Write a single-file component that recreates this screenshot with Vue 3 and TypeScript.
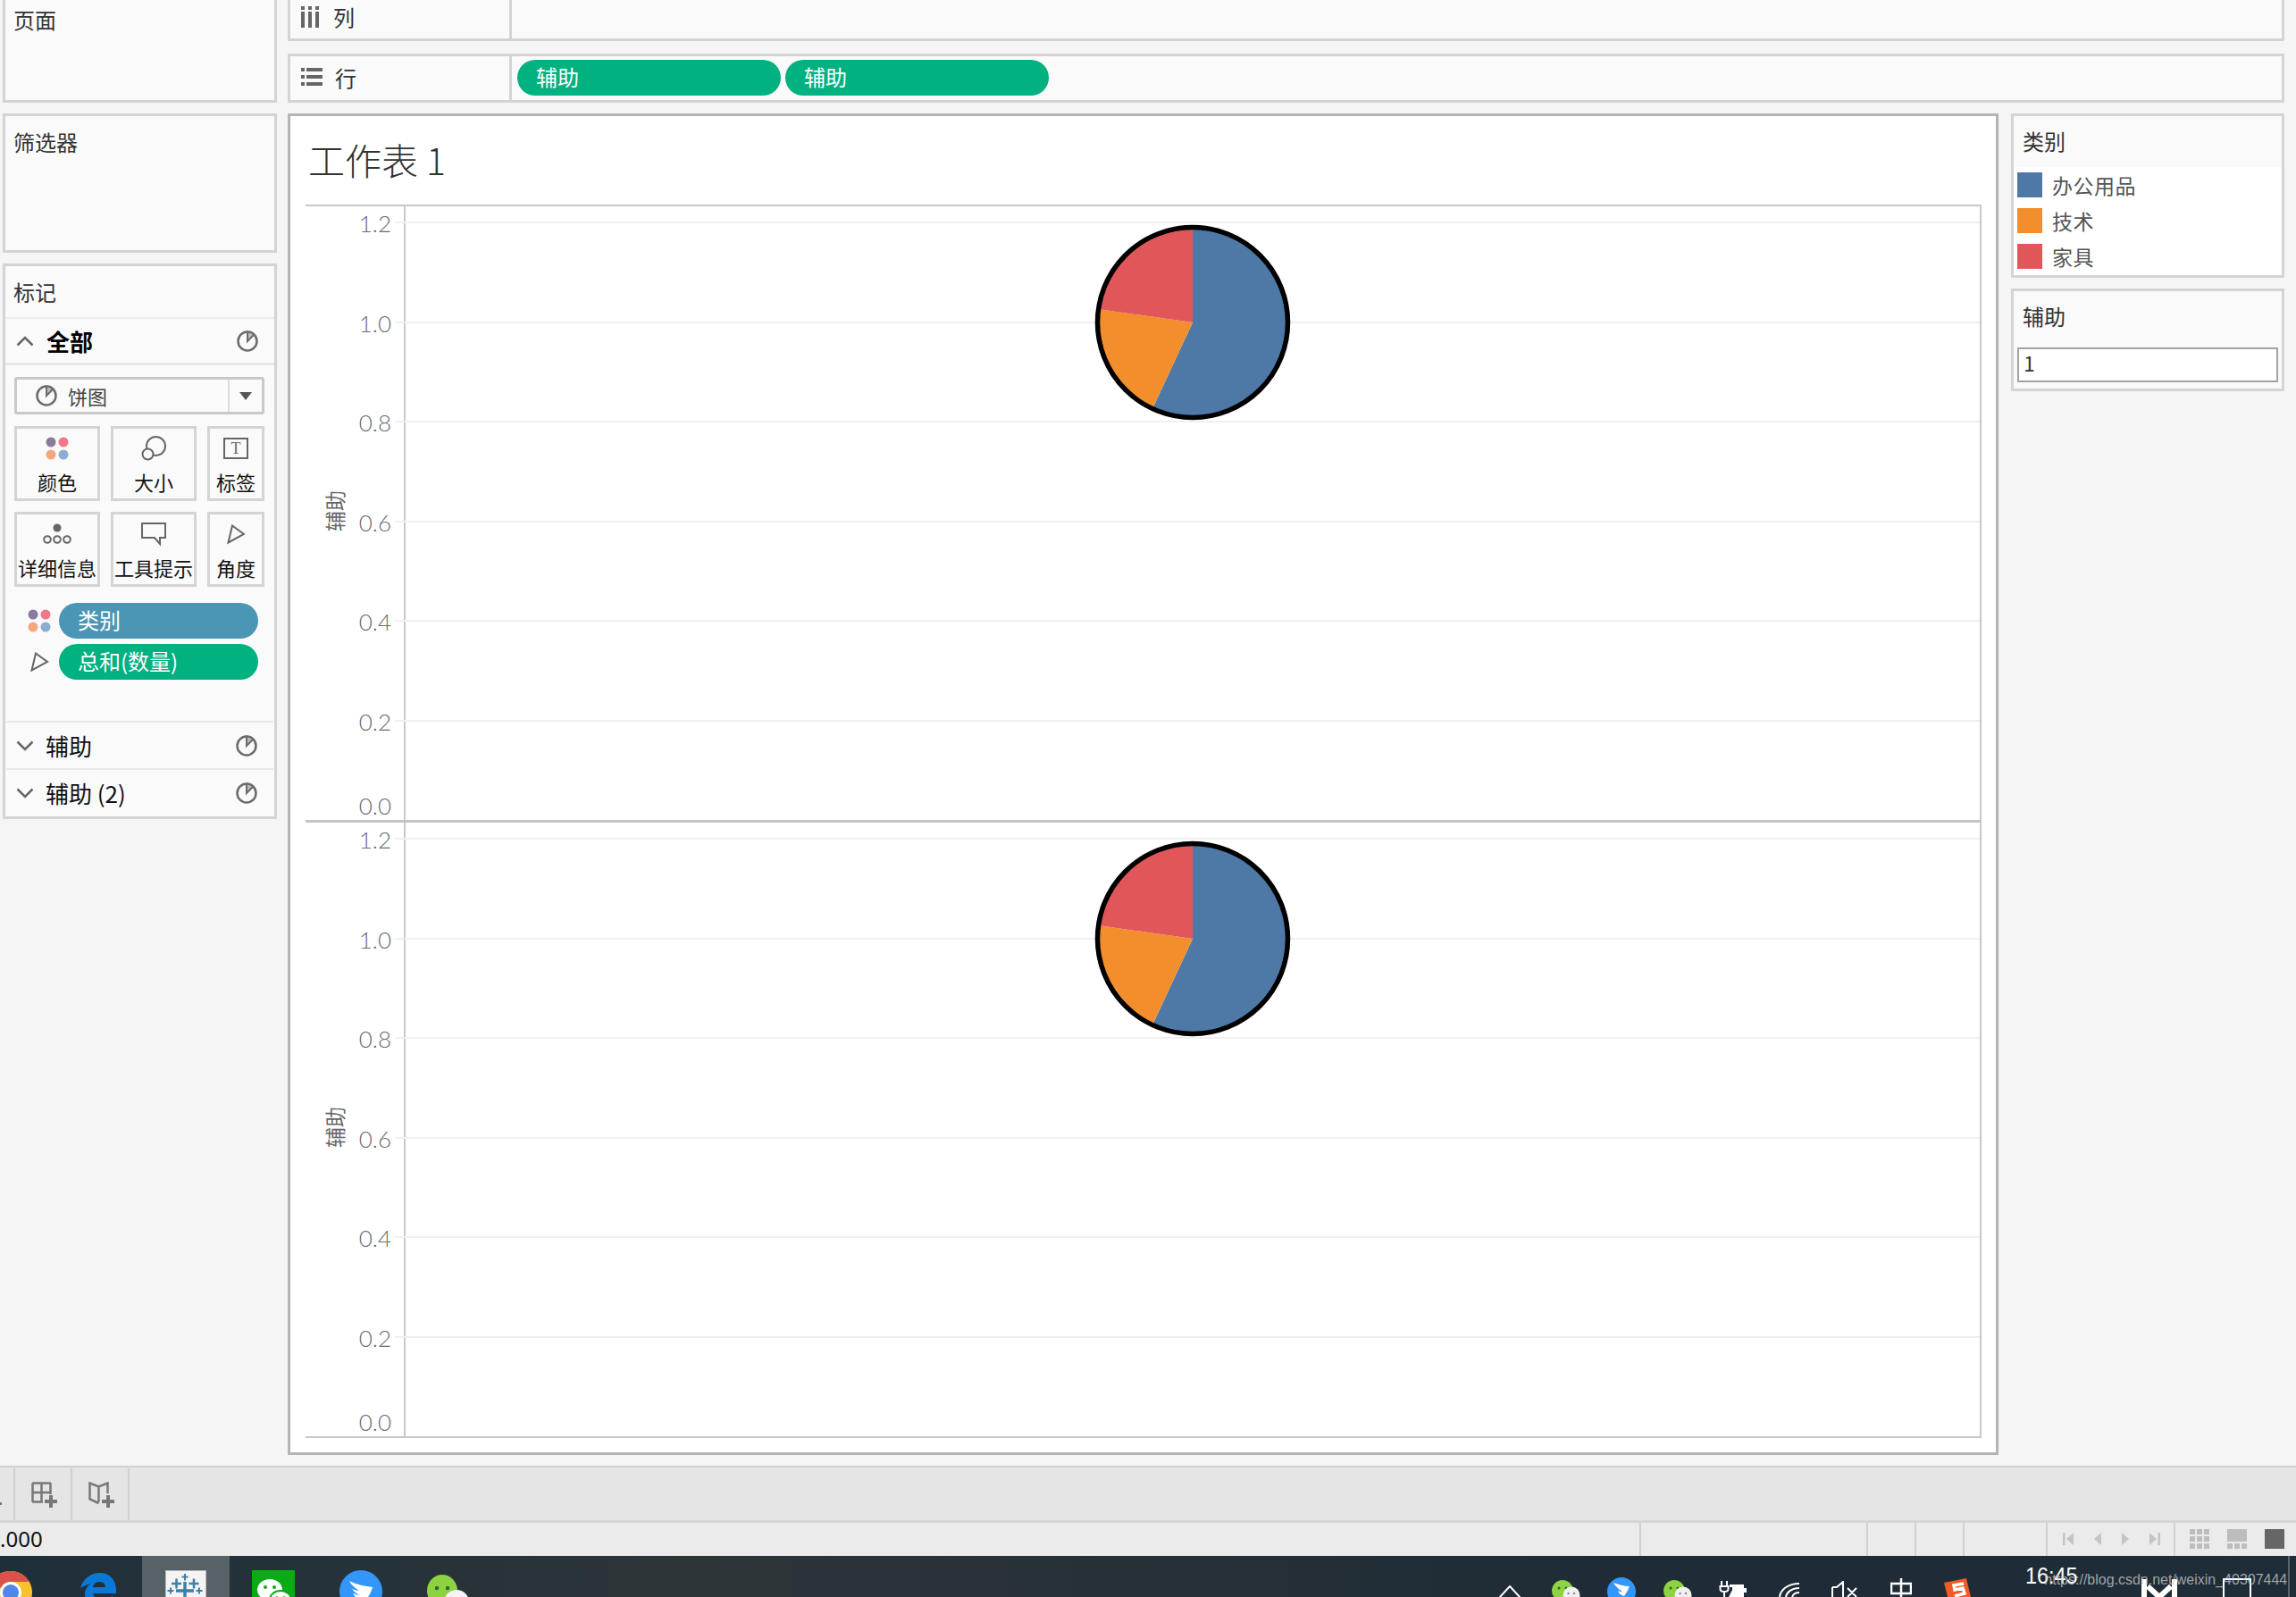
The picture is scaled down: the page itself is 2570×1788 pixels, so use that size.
<script setup lang="ts">
const ticks = ['1.2', '1.0', '0.8', '0.6', '0.4', '0.2', '0.0']
const gridStep = 111.55
const pieSize = 220
const panes = [
  { id: 'top', height: 687, base: 17, lastLabelTop: 671 },
  { id: 'bottom', height: 690, base: 17, lastLabelTop: 671 },
]

const shelfPills = ['辅助', '辅助']
const legend = [
  { name: '办公用品', color: '#4e79a7' },
  { name: '技术', color: '#f28e2b' },
  { name: '家具', color: '#e15759' },
]
const statusCells = [1837, 254, 54, 54, 93, 143]

function polar(deg: number, r = 107) {
  const a = (deg * Math.PI) / 180
  return `${(110 + r * Math.sin(a)).toFixed(2)} ${(110 - r * Math.cos(a)).toFixed(2)}`
}
function slice(from: number, to: number) {
  const large = to - from > 180 ? 1 : 0
  return `M110 110L${polar(from)}A107 107 0 ${large} 1 ${polar(to)}Z`
}
const slices = [
  { d: slice(0, 205), color: '#4e79a7' },
  { d: slice(205, 278), color: '#f28e2b' },
  { d: slice(278, 360), color: '#e15759' },
]
function labelTop(pane: { base: number; lastLabelTop: number }, i: number) {
  return i === ticks.length - 1 ? pane.lastLabelTop : pane.base + 2 + i * gridStep
}
function pieTop(pane: { base: number }) {
  return pane.base + 1 + gridStep - pieSize / 2
}
</script>

<template>
  <div class="page">
    <div class="workspace">
      <aside class="side">
        <section class="card page-card"><h3>页面</h3></section>
        <section class="card filter-card"><h3>筛选器</h3></section>
        <section class="card marks-card">
          <h3 class="marks-title">标记</h3>
          <div class="mark-row all">
            <svg class="chev" width="20" height="12" viewBox="0 0 20 12"><path d="M1.5 10.500 10 2l8.500 8.500" /></svg>
            <b>全部</b>
            <svg class="pie-ico" width="24" height="24" viewBox="0 0 24 24"><circle cx="12" cy="12" r="10.500" /><path class="wedge" d="M12 12V1.500a10.500 10.500 0 0 1 7.400 3Z" /></svg>
          </div>
          <div class="type-select">
            <svg class="pie-ico" width="24" height="24" viewBox="0 0 24 24"><circle cx="12" cy="12" r="10.500" /><path class="wedge" d="M12 12V1.500a10.500 10.500 0 0 1 7.400 3Z" /></svg>
            <span>饼图</span>
            <i class="select-arrow"><em /></i>
          </div>
          <div class="mark-buttons">
            <div class="mark-btn">
              <svg width="26" height="26" viewBox="0 0 26 26"><circle cx="6" cy="6" r="5.500" fill="#8c7a9e" /><circle cx="20" cy="6" r="5.500" fill="#f0788a" /><circle cx="6" cy="20" r="5.500" fill="#f4a77c" /><circle cx="20" cy="20" r="5.500" fill="#8aaed2" /></svg>
              <span>颜色</span>
            </div>
            <div class="mark-btn">
              <svg class="line" width="28" height="28" viewBox="0 0 28 28"><circle cx="16.500" cy="11.500" r="10.500" /><circle cx="7.500" cy="20.500" r="6" fill="#fafafa" /></svg>
              <span>大小</span>
            </div>
            <div class="mark-btn">
              <svg class="line" width="28" height="24" viewBox="0 0 28 24"><rect x="1" y="1" width="26" height="22" /><text x="14" y="18" text-anchor="middle" class="t-glyph">T</text></svg>
              <span>标签</span>
            </div>
            <div class="mark-btn">
              <svg class="line" width="32" height="24" viewBox="0 0 32 24"><circle cx="16" cy="5" r="4.500" fill="#666" stroke="none" /><circle cx="5" cy="18" r="3.800" /><circle cx="16" cy="18" r="3.800" /><circle cx="27" cy="18" r="3.800" /></svg>
              <span>详细信息</span>
            </div>
            <div class="mark-btn">
              <svg class="line" width="28" height="26" viewBox="0 0 28 26"><path d="M1 1h26v16h-6v7l-6-7H1Z" /></svg>
              <span>工具提示</span>
            </div>
            <div class="mark-btn">
              <svg class="line" width="20" height="22" viewBox="0 0 20 22"><path d="M6 1.500 19 11 1.500 20.500Z" /></svg>
              <span>角度</span>
            </div>
          </div>
          <div class="encodings">
            <div class="encoding">
              <svg width="26" height="26" viewBox="0 0 26 26"><circle cx="6" cy="6" r="5.500" fill="#8c7a9e" /><circle cx="20" cy="6" r="5.500" fill="#f0788a" /><circle cx="6" cy="20" r="5.500" fill="#f4a77c" /><circle cx="20" cy="20" r="5.500" fill="#8aaed2" /></svg>
              <span class="pill blue">类别</span>
            </div>
            <div class="encoding">
              <svg class="line" width="20" height="22" viewBox="0 0 20 22"><path d="M6 1.500 19 11 1.500 20.500Z" /></svg>
              <span class="pill">总和(数量)</span>
            </div>
          </div>
          <div class="mark-row sub">
            <svg class="chev" width="20" height="12" viewBox="0 0 20 12"><path d="M1.500 1.500 10 10l8.500-8.500" /></svg>
            <span>辅助</span>
            <svg class="pie-ico" width="24" height="24" viewBox="0 0 24 24"><circle cx="12" cy="12" r="10.500" /><path class="wedge" d="M12 12V1.500a10.500 10.500 0 0 1 7.400 3Z" /></svg>
          </div>
          <div class="mark-row sub">
            <svg class="chev" width="20" height="12" viewBox="0 0 20 12"><path d="M1.500 1.500 10 10l8.500-8.500" /></svg>
            <span>辅助 (2)</span>
            <svg class="pie-ico" width="24" height="24" viewBox="0 0 24 24"><circle cx="12" cy="12" r="10.500" /><path class="wedge" d="M12 12V1.500a10.500 10.500 0 0 1 7.400 3Z" /></svg>
          </div>
        </section>
      </aside>

      <main class="main">
        <div class="shelf col-shelf">
          <div class="shelf-head">
            <svg width="20" height="24" viewBox="0 0 20 24" fill="#666"><rect x="0" y="0" width="4" height="4" /><rect x="8" y="0" width="4" height="4" /><rect x="16" y="0" width="4" height="4" /><rect x="0" y="6" width="4" height="18" /><rect x="8" y="6" width="4" height="18" /><rect x="16" y="6" width="4" height="18" /></svg>
            <span>列</span>
          </div>
        </div>
        <div class="shelf row-shelf">
          <div class="shelf-head">
            <svg width="24" height="20" viewBox="0 0 24 20" fill="#666"><rect x="0" y="0" width="4" height="4" /><rect x="0" y="8" width="4" height="4" /><rect x="0" y="16" width="4" height="4" /><rect x="6" y="0" width="18" height="4" /><rect x="6" y="8" width="18" height="4" /><rect x="6" y="16" width="18" height="4" /></svg>
            <span>行</span>
          </div>
          <div class="shelf-pills">
            <span v-for="(p, i) in shelfPills" :key="i" class="pill">{{ p }}</span>
          </div>
        </div>

        <div class="content">
          <div class="sheet">
            <h1 class="sheet-title">工作表 1</h1>
            <div class="chart">
              <div v-for="pane in panes" :key="pane.id" class="pane" :style="{ height: pane.height + 'px' }">
                <div class="axis-title"><span>辅助</span></div>
                <div class="axis">
                  <span v-for="(t, i) in ticks" :key="t" class="tick" :style="{ top: labelTop(pane, i) + 'px' }">{{ t }}</span>
                </div>
                <div class="plot">
                  <i v-for="k in 6" :key="k" class="grid" :style="{ top: pane.base + (k - 1) * gridStep + 'px' }" />
                  <svg class="pie" :width="pieSize" :height="pieSize" viewBox="0 0 220 220" :style="{ top: pieTop(pane) + 'px' }">
                    <path v-for="s in slices" :key="s.color" :d="s.d" :fill="s.color" />
                    <circle cx="110" cy="110" r="106.500" fill="none" stroke="#000" stroke-width="5.500" />
                  </svg>
                </div>
              </div>
            </div>
          </div>

          <aside class="legend-col">
            <section class="card legend">
              <h3>类别</h3>
              <ul>
                <li v-for="l in legend" :key="l.name">
                  <i :style="{ background: l.color }" />
                  <span>{{ l.name }}</span>
                </li>
              </ul>
            </section>
            <section class="card param">
              <h3>辅助</h3>
              <div class="param-input">1</div>
            </section>
          </aside>
        </div>
      </main>
    </div>

    <div class="tabbar">
      <div class="tab-cell first"><svg width="4" height="8" viewBox="0 0 4 8" fill="#777"><rect y="3" width="2" height="3" /></svg></div>
      <div class="tab-cell">
        <svg width="30" height="30" viewBox="0 0 30 30"><g fill="none" stroke="#777" stroke-width="2.500"><path d="M13 22.500H2.500a1 1 0 0 1-1-1v-19a1 1 0 0 1 1-1h18a1 1 0 0 1 1 1V14M1.500 12h20M11.500 1.500v21" /></g><path fill="#777" d="M20 15h4v5h5v4h-5v5h-4v-5h-5v-4h5Z" /></svg>
      </div>
      <div class="tab-cell">
        <svg width="30" height="30" viewBox="0 0 30 30"><path fill="none" stroke="#777" stroke-width="2.500" d="M21.500 13V1.500l-10 4-10-4v18l10 4.500M11.500 5.500v17" /><path fill="#777" d="M20 15h4v5h5v4h-5v5h-4v-5h-5v-4h5Z" /></svg>
      </div>
    </div>

    <div class="statusbar">
      <div v-for="(w, i) in statusCells" :key="i" class="status-cell" :style="{ width: w + 'px' }">
        <span v-if="i === 0">.000</span>
        <div v-if="i === 5" class="pager">
          <svg width="12" height="14" viewBox="0 0 12 14" fill="#c4c4c4"><rect width="2.500" height="14" /><path d="M12 0v14L4 7Z" /></svg>
          <svg width="8" height="14" viewBox="0 0 8 14" fill="#c4c4c4"><path d="M8 0v14L0 7Z" /></svg>
          <svg width="8" height="14" viewBox="0 0 8 14" fill="#c4c4c4"><path d="M0 0v14l8-7Z" /></svg>
          <svg width="12" height="14" viewBox="0 0 12 14" fill="#c4c4c4"><rect x="9.500" width="2.500" height="14" /><path d="M0 0v14l8-7Z" /></svg>
        </div>
      </div>
      <div class="view-btns">
        <svg width="22" height="22" viewBox="0 0 22 22" fill="#bdbdbd"><g v-for="r in 3" :key="r"><rect v-for="c in 3" :key="c" :x="(c - 1) * 8" :y="(r - 1) * 8" width="6" height="6" /></g></svg>
        <svg width="22" height="22" viewBox="0 0 22 22" fill="#bdbdbd"><rect width="22" height="14" /><rect y="16" width="6" height="6" /><rect x="8" y="16" width="6" height="6" /><rect x="16" y="16" width="6" height="6" /></svg>
        <svg width="22" height="22" viewBox="0 0 22 22" fill="#666"><rect width="22" height="22" /></svg>
      </div>
    </div>

    <div class="taskbar">
      <div class="task-apps">
        <div class="task-slot chrome">
          <svg width="48" height="48" viewBox="0 0 48 48"><circle cx="24" cy="24" r="24" fill="#fbc02d" /><path d="M24 0a24 24 0 0 1 21 12H24a12 12 0 0 0-11 7L4 9A24 24 0 0 1 24 0Z" fill="#d9534a" /><circle cx="24" cy="24" r="12" fill="#fff" /><circle cx="24" cy="24" r="9" fill="#4f86ec" /></svg>
        </div>
        <div class="task-slot edge">
          <svg width="40" height="40" viewBox="0 0 40 40"><path d="M0 17C3 6 12 0 22 0c11 0 18 8 18 20v3H14c1 7 12 8 22 3v9C24 41 5 38 5 23c0-4 3-9 7-11-5 1-9 3-12 5Zm14-1h14c0-8-13-8-14 0Z" fill="#0a78d7" /></svg>
        </div>
        <div class="task-slot active">
          <svg width="46" height="46" viewBox="0 0 46 46"><rect x="0.500" y="0.500" width="45" height="45" fill="#f4f4f4" stroke="#bbb" /><g fill="none" stroke="#3f7fa8"><path stroke-width="3.500" d="M22 13v20M12 23h20" /><path stroke-width="2.500" d="M12.500 9.500v11M7 15h11M32 9.500v11M26.500 15h11" /><path stroke-width="2" d="M22 4v7.500M18.500 7.500h7M6 19.500v7M2.500 23h7M38 19.500v7M34.500 23h7" /></g></svg>
        </div>
        <div class="task-slot">
          <svg width="48" height="48" viewBox="0 0 48 48"><rect width="48" height="48" fill="#09ab17" /><ellipse cx="20" cy="22" rx="14" ry="12" fill="#fff" /><circle cx="15" cy="19" r="2" fill="#09ab17" /><circle cx="25" cy="19" r="2" fill="#09ab17" /><ellipse cx="32" cy="33" rx="12" ry="10" fill="#fff" stroke="#09ab17" stroke-width="2" /><circle cx="28" cy="31" r="1.700" fill="#09ab17" /><circle cx="36" cy="31" r="1.700" fill="#09ab17" /></svg>
        </div>
        <div class="task-slot">
          <svg width="48" height="48" viewBox="0 0 48 48"><circle cx="24" cy="24" r="24" fill="#3296fa" /><path d="M11 12c8 4 18 6 26 7-2 7-5 12-8 14l-2 10-3-1 1-8c-5-1-8-4-10-8 3 1 6 2 8 2-3-1-7-4-9-7 3 1 6 2 8 2-5-3-9-7-11-11Z" fill="#fff" /></svg>
        </div>
        <div class="task-slot wechat">
          <svg width="48" height="44" viewBox="0 0 48 44"><ellipse cx="17" cy="18" rx="17" ry="18" fill="#8ed141" /><circle cx="11" cy="15" r="2.200" fill="#1d6f2d" /><circle cx="23" cy="15" r="2.200" fill="#1d6f2d" /><circle cx="33" cy="31" r="14" fill="#f4f4f4" /><circle cx="28" cy="28" r="2" fill="#777" /><circle cx="38" cy="28" r="2" fill="#777" /></svg>
        </div>
      </div>

      <div class="tray">
        <div class="tray-slot top-33"><svg width="26" height="14" viewBox="0 0 26 14"><path d="M1 14 13 1l12 13" fill="none" stroke="#fff" stroke-width="2" /></svg></div>
        <div class="tray-slot top-27"><svg width="32" height="20" viewBox="0 0 32 20"><ellipse cx="12" cy="12" rx="12" ry="12" fill="#8ed141" /><circle cx="8" cy="9" r="1.500" fill="#1d6f2d" /><circle cx="16" cy="9" r="1.500" fill="#1d6f2d" /><circle cx="22" cy="17" r="9.500" fill="#f0f0f0" /><circle cx="18.500" cy="15" r="1.200" fill="#888" /><circle cx="25" cy="15" r="1.200" fill="#888" /></svg></div>
        <div class="tray-slot top-24"><svg width="32" height="22" viewBox="0 0 32 22"><circle cx="16" cy="16" r="16" fill="#3296fa" /><path d="M7 6c6 2 12 4 18 4-2 5-4 8-6 11-4-1-6-3-7-6 2 1 3 1 5 1-3-2-8-6-10-10Z" fill="#fff" /></svg></div>
        <div class="tray-slot top-27"><svg width="32" height="20" viewBox="0 0 32 20"><ellipse cx="12" cy="12" rx="12" ry="12" fill="#8ed141" /><circle cx="8" cy="9" r="1.500" fill="#1d6f2d" /><circle cx="16" cy="9" r="1.500" fill="#1d6f2d" /><circle cx="22" cy="17" r="9.500" fill="#f0f0f0" /><circle cx="18.500" cy="15" r="1.200" fill="#888" /><circle cx="25" cy="15" r="1.200" fill="#888" /></svg></div>
        <div class="tray-slot top-28"><svg width="32" height="18" viewBox="0 0 32 18"><path d="M3 0v6M9 0v6M1.500 6h9v3c0 2-2 3-4.500 3S1.500 11 1.500 9ZM6 12v6" fill="none" stroke="#fff" stroke-width="2" /><path d="M12 4h16v4h3v5h-3v5H11l4-8V7h-3Z" fill="#fff" /></svg></div>
        <div class="tray-slot top-30"><svg width="24" height="16" viewBox="0 0 24 16" fill="none" stroke="#fff" stroke-width="2"><path d="M1 16C2 8 10 1 23 1M8 16C9 11 14 6 23 6M15 16c1-3 3-5 8-5" /></svg></div>
        <div class="tray-slot top-28"><svg width="30" height="18" viewBox="0 0 30 18" fill="none" stroke="#fff" stroke-width="2"><path d="M1 7h5l7-6v17M1 7v11M18 8l10 10M28 8 18 18" /></svg></div>
        <div class="tray-slot top-25"><svg width="24" height="21" viewBox="0 0 24 21"><path d="M12 0v21M1 6h22v11H1Z" fill="none" stroke="#fff" stroke-width="2.500" /></svg></div>
        <div class="tray-slot top-25"><svg width="32" height="21" viewBox="0 0 32 21"><path d="M2 5 27 0l5 21H6Z" fill="#f05a24" /><path d="M24 6 13 8l1 5 9-2 2 6-11 3" fill="none" stroke="#fff" stroke-width="3.500" /></svg></div>
      </div>
      <span class="clock">16:45</span>
      <svg class="task-mark" width="42" height="20" viewBox="0 0 42 20"><path d="M4 20V0M38 20V0" fill="none" stroke="#fff" stroke-width="6" /><path d="M8 8l13 12L34 8" fill="none" stroke="#fff" stroke-width="6" /></svg>
      <svg class="task-note" width="32" height="21" viewBox="0 0 32 21"><path d="M1 21V1h30v20" fill="none" stroke="#fff" stroke-width="2" /></svg>
      <span class="watermark">https://blog.csdn.net/weixin_40307444</span>
      <i class="task-edge" />
    </div>
  </div>
</template>

<style>
html,
body {
  margin: 0;
  background: #f5f5f5;
  overflow: hidden;
}
</style>

<style scoped>
.page {
  width: 2570px;
  height: 1788px;
  display: flex;
  flex-direction: column;
  overflow: hidden;
  font-family: "Noto Sans CJK SC", sans-serif;
  color: #333;
  font-size: 24px;
}
h1, h3, ul {
  margin: 0;
  padding: 0;
  font-weight: 400;
}
.workspace {
  height: 1641px;
  display: flex;
  gap: 12px;
  padding-left: 3px;
  padding-right: 13px;
  box-sizing: border-box;
}
.side {
  width: 307px;
  flex: none;
  display: flex;
  flex-direction: column;
  gap: 12px;
}
.card {
  background: #fafafa;
  border: 3px solid #d4d4d4;
  box-sizing: border-box;
}
.card h3 {
  font-size: 24px;
  line-height: 32px;
}
.page-card {
  height: 115px;
  border-top: none;
  padding: 6px 0 0 9px;
}
.filter-card {
  height: 156px;
  padding: 13px 0 0 9px;
}
.marks-card {
  height: 622px;
  display: flex;
  flex-direction: column;
}
.marks-title {
  height: 59px;
  padding: 13px 0 0 9px;
  box-sizing: border-box;
  border-bottom: 2px solid #ececec;
}
.mark-row {
  display: flex;
  align-items: center;
  padding: 0 18px 0 12px;
  color: #111;
}
.mark-row .pie-ico {
  margin-left: auto;
}
.all {
  height: 52px;
  box-sizing: border-box;
  border-bottom: 3px solid #e8e8e8;
  font-size: 26px;
}
.all b {
  margin-left: 14px;
  color: #000;
}
.chev path {
  fill: none;
  stroke: #666;
  stroke-width: 2.500;
}
.pie-ico circle {
  fill: none;
  stroke: #6b6b6b;
  stroke-width: 2.500;
}
.pie-ico .wedge {
  fill: #bdbdbd;
  stroke: #6b6b6b;
  stroke-width: 2;
}
.type-select {
  margin: 13px 11px 0 10px;
  height: 42px;
  border: 3px solid #c9c9c9;
  border-radius: 3px;
  box-sizing: border-box;
  display: flex;
  align-items: center;
  padding-left: 21px;
  font-size: 22px;
  color: #444;
}
.type-select span {
  margin-left: 12px;
}
.select-arrow {
  margin-left: auto;
  width: 36px;
  align-self: stretch;
  border-left: 2px solid #ddd;
  display: flex;
  align-items: center;
  justify-content: center;
}
.select-arrow em {
  border: 7px solid transparent;
  border-top: 9px solid #555;
  border-bottom: none;
}
.mark-buttons {
  margin: 13px 11px 0 10px;
  display: grid;
  grid-template-columns: 96px 96px 64px;
  grid-auto-rows: 84px;
  gap: 12px;
}
.mark-btn {
  border: 3px solid #d4d4d4;
  box-sizing: border-box;
  display: flex;
  flex-direction: column;
  align-items: center;
  font-size: 22px;
  color: #111;
}
.mark-btn svg {
  height: 30px;
  margin-top: 7px;
}
.mark-btn span {
  line-height: 30px;
  margin-top: 7px;
  white-space: nowrap;
}
.line {
  fill: none;
  stroke: #666;
  stroke-width: 2;
}
.t-glyph {
  font-family: "Liberation Serif", serif;
  font-size: 18px;
  fill: #666;
  stroke: none;
}
.encodings {
  margin: 18px 18px 0 25px;
  display: flex;
  flex-direction: column;
  gap: 6px;
  height: 132px;
  flex: none;
  box-sizing: border-box;
}
.encoding {
  display: flex;
  align-items: center;
  height: 40px;
}
.encoding svg {
  width: 30px;
  margin-left: -2px;
  margin-right: 7px;
  flex: none;
}
.pill {
  background: #02b180;
  color: #fff;
  height: 40px;
  line-height: 38px;
  border-radius: 20px;
  padding: 0 21px;
  box-sizing: border-box;
  font-size: 24px;
  display: block;
}
.encoding .pill {
  flex: 1;
}
.pill.blue {
  background: #4c96b5;
}
.sub {
  height: 53px;
  box-sizing: border-box;
  border-top: 2px solid #e8e8e8;
  font-size: 26px;
  margin: 0 1px;
  padding-left: 11px;
}
.sub span {
  margin-left: 13px;
}
.main {
  flex: 1;
  min-width: 0;
  display: flex;
  flex-direction: column;
}
.shelf {
  background: #fafafa;
  border: 3px solid #d4d4d4;
  box-sizing: border-box;
  display: flex;
}
.col-shelf {
  height: 46px;
  border-top: none;
}
.row-shelf {
  height: 55px;
  margin-top: 14px;
}
.shelf-head {
  width: 248px;
  flex: none;
  box-sizing: border-box;
  border-right: 3px solid #d4d4d4;
  display: flex;
  align-items: center;
  padding-left: 12px;
  color: #333;
}
.col-shelf .shelf-head {
  padding-bottom: 6px;
}
.row-shelf .shelf-head {
  padding-bottom: 3px;
}
.col-shelf .shelf-head svg {
  margin-right: 16px;
}
.row-shelf .shelf-head svg {
  margin-right: 14px;
}
.shelf-pills {
  display: flex;
  gap: 5px;
  padding: 4px 0 0 6px;
}
.shelf-pills .pill {
  width: 295px;
}
.content {
  margin-top: 12px;
  display: flex;
  gap: 14px;
}
.sheet {
  width: 1915px;
  height: 1502px;
  box-sizing: border-box;
  background: #fff;
  border: 3px solid #b4b4b4;
  padding: 0 16px 0 17px;
}
.sheet-title {
  height: 99px;
  padding: 23px 0 0 3px;
  box-sizing: border-box;
  font-size: 41px;
  line-height: 50px;
  font-weight: 300;
  color: #333;
}
.chart {
  border: solid #c8c8c8;
  border-width: 2px 2px 2px 0;
  width: 1876px;
  box-sizing: border-box;
}
.pane {
  display: flex;
  box-sizing: border-box;
}
.pane + .pane {
  border-top: 3px solid #c4c4c4;
}
.axis-title {
  width: 64px;
  flex: none;
  display: flex;
  align-items: center;
  justify-content: center;
  color: #666;
  font-size: 23px;
  padding-bottom: 6px;
  box-sizing: border-box;
}
.axis-title span {
  writing-mode: vertical-rl;
  text-orientation: sideways;
  transform: rotate(180deg);
}
.axis {
  width: 46px;
  flex: none;
  position: relative;
}
.tick {
  position: absolute;
  right: 14px;
  transform: translateY(-50%);
  font-family: Lato, sans-serif;
  font-size: 26px;
  line-height: 30px;
  font-weight: 300;
  color: #666b75;
}
.plot {
  flex: 1;
  position: relative;
  border-left: 2px solid #c8c8c8;
}
.grid {
  position: absolute;
  left: -12px;
  right: 0;
  height: 2px;
  background: #f0f0f0;
}
.pie {
  position: absolute;
  left: 771px;
}
.legend-col {
  width: 306px;
  display: flex;
  flex-direction: column;
  gap: 12px;
}
.legend {
  height: 184px;
}
.legend h3 {
  height: 57px;
  padding: 12px 0 0 10px;
  box-sizing: border-box;
}
.legend ul {
  list-style: none;
  background: #fff;
  height: 121px;
  padding: 6px 0 0 4px;
  box-sizing: border-box;
  display: flex;
  flex-direction: column;
  gap: 12px;
}
.legend li {
  display: flex;
  align-items: center;
  height: 28px;
  font-size: 23px;
  color: #555;
  letter-spacing: 0.5px;
}
.legend li i {
  width: 28px;
  height: 28px;
  margin-right: 11px;
}
.param {
  height: 115px;
  padding: 12px 4px 0 4px;
}
.param h3 {
  padding-left: 6px;
}
.param-input {
  margin-top: 19px;
  height: 39px;
  box-sizing: border-box;
  background: #fff;
  border: 2px solid #a3a3a3;
  padding-left: 5px;
  line-height: 31px;
  font-size: 23px;
  color: #333;
}
.tabbar {
  height: 61px;
  box-sizing: border-box;
  background: #e5e5e5;
  border-top: 2px solid #cfcfcf;
  display: flex;
  padding-top: 1px;
}
.tab-cell {
  width: 64px;
  height: 58px;
  box-sizing: border-box;
  border-right: 2px solid #d0d0d0;
  display: flex;
  align-items: center;
  justify-content: center;
  padding-left: 4px;
  padding-top: 2px;
}
.tab-cell.first {
  width: 17px;
  justify-content: flex-start;
  align-items: flex-end;
  padding: 0 0 15px;
}
.statusbar {
  height: 40px;
  box-sizing: border-box;
  background: #ebebeb;
  border-top: 3px solid #d6d6d6;
  display: flex;
}
.status-cell {
  box-sizing: border-box;
  border-right: 2px solid #d0d0d0;
  flex: none;
  font-size: 24px;
  line-height: 36px;
  color: #111;
  font-family: "Noto Sans", sans-serif;
}
.pager {
  display: flex;
  align-items: center;
  height: 36px;
  padding-left: 17px;
  gap: 23px;
}
.view-btns {
  display: flex;
  gap: 20px;
  padding: 7px 0 0 16px;
}
.taskbar {
  position: relative;
  height: 46px;
  overflow: hidden;
  flex: none;
  display: flex;
  background: linear-gradient(90deg, #1f2f3a 0%, #2c3538 30%, #1f2b36 70%, #1f2d38 100%);
}
.task-apps {
  display: flex;
  margin-left: -37px;
}
.task-slot {
  width: 98px;
  height: 46px;
  display: flex;
  justify-content: center;
  padding-top: 16px;
  box-sizing: border-box;
  flex: none;
}
.task-slot.active {
  background: #566265;
}
.task-slot.chrome {
  padding-top: 17px;
}
.task-slot.edge {
  padding-top: 19px;
}
.task-slot.wechat {
  padding-top: 21px;
}
.tray {
  display: flex;
  margin-left: 1108px;
}
.tray-slot {
  width: 62.500px;
  flex: none;
  display: flex;
  justify-content: center;
  box-sizing: border-box;
}
.top-24 { padding-top: 24px; }
.top-25 { padding-top: 25px; }
.top-27 { padding-top: 27px; }
.top-28 { padding-top: 28px; }
.top-30 { padding-top: 30px; }
.top-33 { padding-top: 33px; }
.clock {
  margin-left: 45px;
  color: #fff;
  font-family: "Liberation Sans", sans-serif;
  font-size: 26px;
  line-height: 30px;
  margin-top: 7px;
  transform: scaleX(0.9);
  transform-origin: left;
}
.task-mark,
.task-note {
  position: absolute;
}
.task-mark {
  left: 2396px;
  top: 26px;
}
.task-note {
  left: 2488px;
  top: 25px;
}
.watermark {
  position: absolute;
  right: 10px;
  top: 15px;
  color: rgba(205, 205, 205, 0.75);
  font-family: "Liberation Sans", sans-serif;
  font-size: 17px;
  line-height: 24px;
  white-space: nowrap;
  transform: scaleX(0.94);
  transform-origin: right;
}
.task-edge {
  position: absolute;
  left: 2561px;
  top: 0;
  bottom: 0;
  width: 2px;
  background: #5a6468;
}
</style>
